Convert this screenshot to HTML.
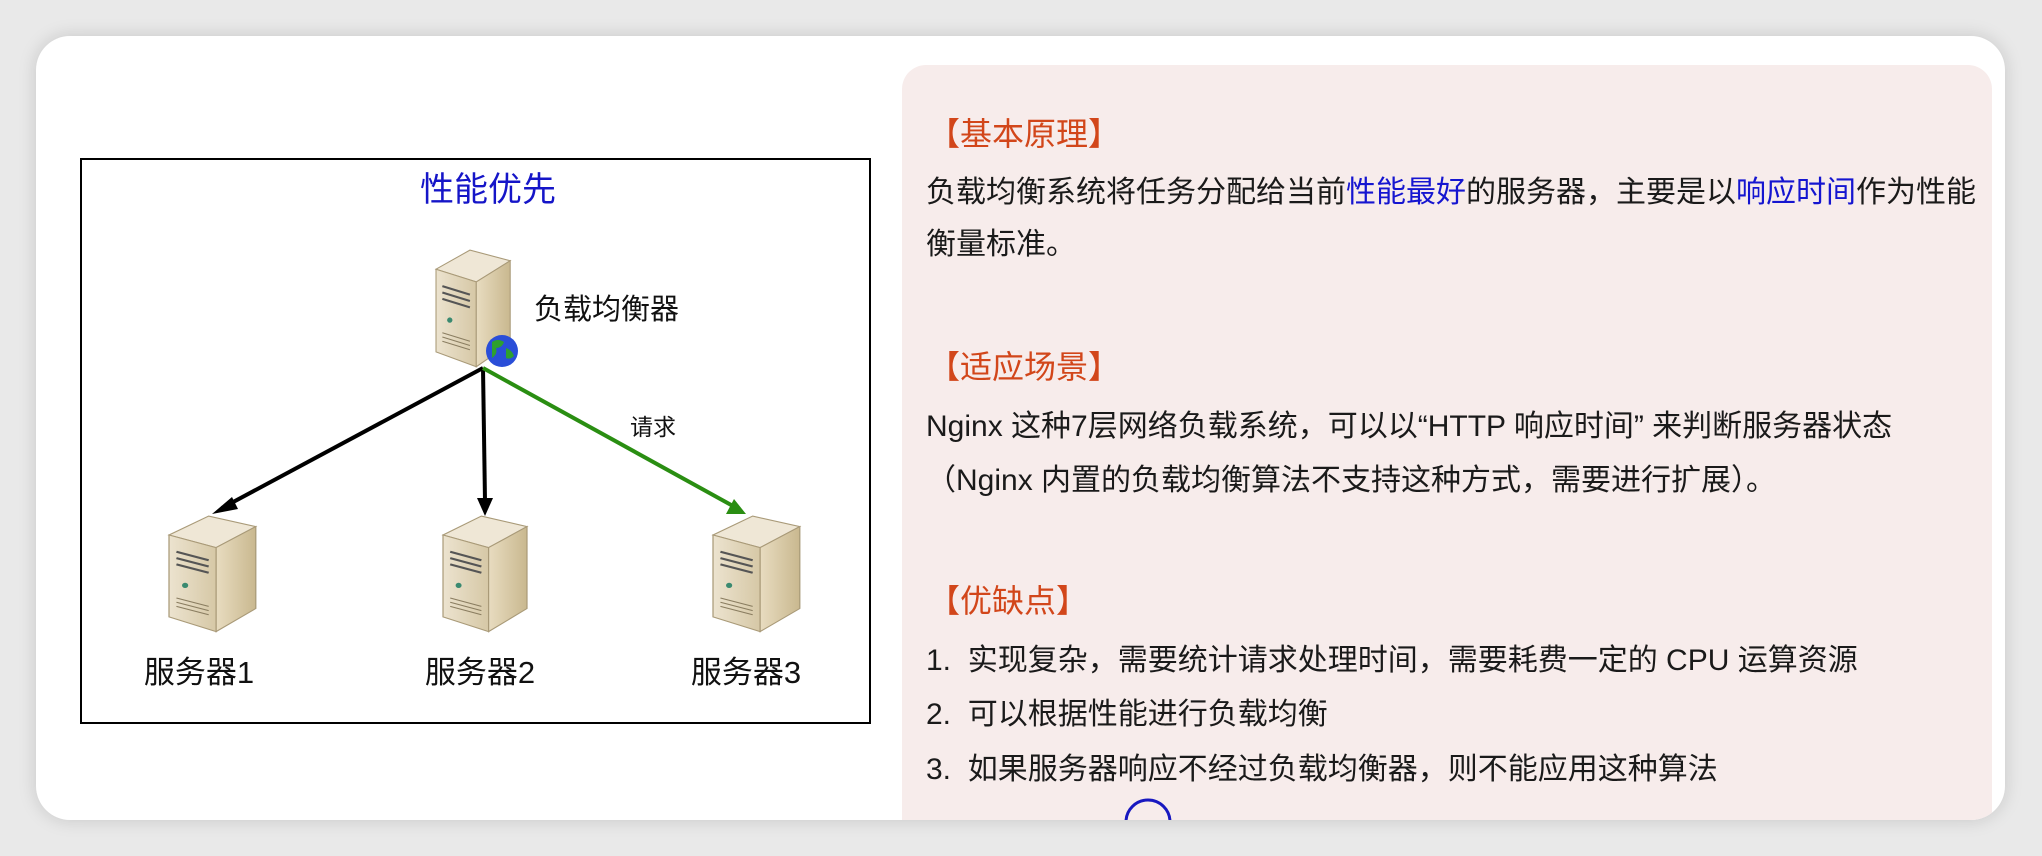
<!DOCTYPE html>
<html><head><meta charset="utf-8"><style>
body{margin:0;width:2042px;height:856px;background:#e9e9e9;overflow:hidden;position:relative;font-family:"Liberation Sans","Noto Sans CJK SC",sans-serif}
.card{position:absolute;left:36px;top:36px;width:1969px;height:784px;background:#fff;border-radius:34px;box-shadow:0 0 18px rgba(0,0,0,.15);overflow:hidden}
.panel{position:absolute;left:866px;top:29px;width:1090px;height:800px;background:#f7eceb;border-radius:24px}
.t{position:absolute;white-space:nowrap;color:#1a1a1a}
.h{font-size:32px;color:#d2461a}
.b{font-size:30px}
.bl{color:#1515d0}
</style></head><body>
<div class="card">
<div class="panel"></div>
<svg style="position:absolute;left:0;top:0" width="1969" height="784">
<defs>
<linearGradient id="f" x1="0" x2="1"><stop offset="0" stop-color="#ece3cf"/><stop offset="1" stop-color="#d6c8a6"/></linearGradient>
<linearGradient id="s" x1="0" x2="1"><stop offset="0" stop-color="#e8dcc0"/><stop offset="1" stop-color="#c9b88f"/></linearGradient>
<g id="srv">
<polygon points="0,20 32,2 70,12 38,32" fill="#efe7d6" stroke="#a99a78" stroke-width="1"/>
<polygon points="0,20 38,32 38,112 0,98" fill="url(#f)" stroke="#a99a78" stroke-width="1"/>
<polygon points="38,32 70,12 70,90 38,112" fill="url(#s)" stroke="#a99a78" stroke-width="1"/>
<path d="M6,36 L32,44 M6,42 L32,50 M6,48 L32,56" stroke="#555" stroke-width="2"/>
<circle cx="13" cy="68" r="2.5" fill="#3a8a70"/>
<path d="M6,80 L32,88 M6,84 L32,92 M6,88 L32,96" stroke="#8a7d60" stroke-width="1"/>
</g>
</defs>
<rect x="45" y="123" width="789" height="564" fill="#fff" stroke="#000" stroke-width="2"/>
<text x="452" y="165" font-size="34" fill="#1515c8" text-anchor="middle" font-family="Liberation Sans,Noto Sans CJK SC,sans-serif">性能优先</text>
<use href="#srv" transform="translate(400,212) scale(1.06)"/>
<circle cx="466" cy="315" r="16" fill="#2a4ed8"/><path d="M456,306 q6,-4 12,0 q-2,6 -8,6 q2,6 -4,10z M470,312 q6,2 8,8 q-4,4 -8,2z" fill="#2ea02e"/>
<text x="498" y="283" font-size="29" fill="#111" font-family="Liberation Sans,Noto Sans CJK SC,sans-serif">负载均衡器</text>
<line x1="447" y1="332" x2="186" y2="472" stroke="#000" stroke-width="4"/>
<polygon points="176,478 196,461 202,473" fill="#000"/>
<line x1="447" y1="332" x2="449" y2="465" stroke="#000" stroke-width="4"/>
<polygon points="449,480 441,462 457,462" fill="#000"/>
<line x1="447" y1="332" x2="697" y2="470" stroke="#2a8e12" stroke-width="4"/>
<polygon points="710,478 690,478 698,463" fill="#2a8e12"/>
<text x="594" y="399" font-size="23" fill="#111" font-family="Liberation Sans,Noto Sans CJK SC,sans-serif">请求</text>
<use href="#srv" transform="translate(133,478) scale(1.24,1.05)"/>
<use href="#srv" transform="translate(407,478) scale(1.2,1.05)"/>
<use href="#srv" transform="translate(677,478) scale(1.24,1.05)"/>
<text x="163" y="647" font-size="31" fill="#111" text-anchor="middle" font-family="Liberation Sans,Noto Sans CJK SC,sans-serif">服务器1</text>
<text x="444" y="647" font-size="31" fill="#111" text-anchor="middle" font-family="Liberation Sans,Noto Sans CJK SC,sans-serif">服务器2</text>
<text x="710" y="647" font-size="31" fill="#111" text-anchor="middle" font-family="Liberation Sans,Noto Sans CJK SC,sans-serif">服务器3</text>
<circle cx="1112" cy="786" r="22" fill="none" stroke="#1818c0" stroke-width="3"/>
</svg>
<div class="t h" style="left:892px;top:73px">【基本原理】</div>
<div class="t b" style="left:890px;top:131px">负载均衡系统将任务分配给当前<span class="bl">性能最好</span>的服务器，主要是以<span class="bl">响应时间</span>作为性能</div>
<div class="t b" style="left:890px;top:183px">衡量标准。</div>
<div class="t h" style="left:892px;top:306px">【适应场景】</div>
<div class="t b" style="left:890px;top:365px">Nginx 这种7层网络负载系统，可以以“HTTP 响应时间” 来判断服务器状态</div>
<div class="t b" style="left:890px;top:419px">（Nginx 内置的负载均衡算法不支持这种方式，需要进行扩展）。</div>
<div class="t h" style="left:892px;top:540px">【优缺点】</div>
<div class="t b" style="left:890px;top:599px">1.&nbsp; 实现复杂，需要统计请求处理时间，需要耗费一定的 CPU 运算资源</div>
<div class="t b" style="left:890px;top:653px">2.&nbsp; 可以根据性能进行负载均衡</div>
<div class="t b" style="left:890px;top:708px">3.&nbsp; 如果服务器响应不经过负载均衡器，则不能应用这种算法</div>
</div>
</body></html>
